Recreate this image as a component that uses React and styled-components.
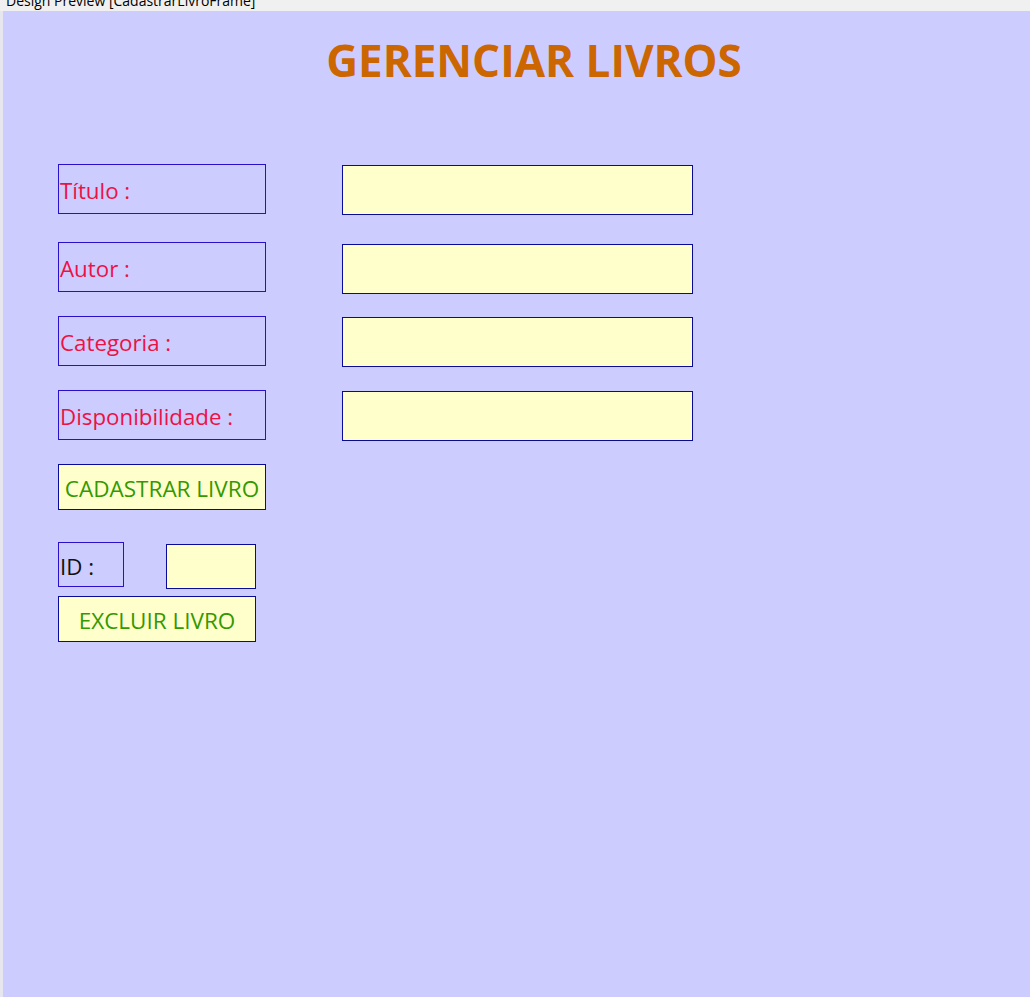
import React from "react";
import styled, { createGlobalStyle } from "styled-components";

const Global = createGlobalStyle`
  html, body { margin: 0; padding: 0; }
  body {
    width: 1030px;
    height: 997px;
    overflow: hidden;
    background: #f0f0f0;
    font-family: "Open Sans", "Noto Sans", sans-serif;
  }
`;

const Window = styled.div`
  display: flex;
  flex-direction: column;
  width: 1030px;
  height: 997px;
`;

const TitleBar = styled.div`
  height: 11px;
  overflow: hidden;
  background: #f0f0f0;
  padding-left: 6px;
`;

const TitleBarText = styled.div`
  margin-top: -8px;
  font-size: 14px;
  line-height: 17px;
  color: #000;
`;

const Frame = styled.div`
  flex: 1;
  display: flex;
  flex-direction: column;
  background: #ccccff;
  border-left: 3px solid #e6e6ee;
  padding: 0 0 0 55px;
`;

const Heading = styled.h1`
  margin: 0;
  padding-top: 29px;
  padding-left: 196px;
  width: 560px;
  text-align: center;
  font-size: 44px;
  line-height: 40px;
  font-weight: 700;
  color: #cc6600;
  letter-spacing: 0px;
`;

const Form = styled.div`
  display: flex;
  flex-direction: column;
  padding-top: 84px;
`;

const Row = styled.div`
  display: flex;
  align-items: flex-start;
  gap: ${(p) => p.$gap || 0}px;
  margin-top: ${(p) => p.$top || 0}px;
`;

const LabelBox = styled.div`
  box-sizing: border-box;
  width: ${(p) => p.$w}px;
  height: ${(p) => p.$h}px;
  border: 1px solid #2a10cc;
  padding: 3px 1px 0 1px;
  display: flex;
  align-items: center;
  font-size: 22.3px;
  color: ${(p) => p.$color || "#ee1144"};
  white-space: nowrap;
  overflow: visible;
`;

const Input = styled.input`
  box-sizing: border-box;
  width: ${(p) => p.$w}px;
  height: ${(p) => p.$h}px;
  margin: ${(p) => p.$top || 0}px 0 0 0;
  background: #ffffcc;
  border: 1px solid #0a0a99;
  padding: 0 4px;
  font-family: inherit;
  font-size: 18px;
  outline: none;
`;

const Button = styled.button`
  box-sizing: border-box;
  width: ${(p) => p.$w}px;
  height: 46px;
  margin-top: ${(p) => p.$top || 0}px;
  background: #ffffcc;
  border: 1px solid #0a0a99;
  padding: 3px 0 0 0;
  font-family: "Open Sans", "Noto Sans", sans-serif;
  font-size: 22.5px;
  color: #339900;
  text-align: center;
  white-space: nowrap;
  overflow: visible;
  cursor: pointer;
`;

const fields = [
  { label: "Título :", top: 0, inputTop: 1 },
  { label: "Autor :", top: 27, inputTop: 2 },
  { label: "Categoria :", top: 22, inputTop: 1 },
  { label: "Disponibilidade :", top: 23, inputTop: 1 },
];

export default function App() {
  return (
    <>
      <Global />
      <Window>
        <TitleBar>
          <TitleBarText>Design Preview [CadastrarLivroFrame]</TitleBarText>
        </TitleBar>
        <Frame>
          <Heading>GERENCIAR LIVROS</Heading>
          <Form>
            {fields.map((f) => (
              <Row key={f.label} $gap={76} $top={f.top}>
                <LabelBox $w={208} $h={50}>{f.label}</LabelBox>
                <Input $w={351} $h={50} $top={f.inputTop} />
              </Row>
            ))}
            <Button $w={208} $top={23}>CADASTRAR LIVRO</Button>
            <Row $gap={42} $top={32}>
              <LabelBox $w={66} $h={45} $color="#111">ID :</LabelBox>
              <Input $w={90} $h={45} $top={2} />
            </Row>
            <Button $w={198} $top={7}>EXCLUIR LIVRO</Button>
          </Form>
        </Frame>
      </Window>
    </>
  );
}
